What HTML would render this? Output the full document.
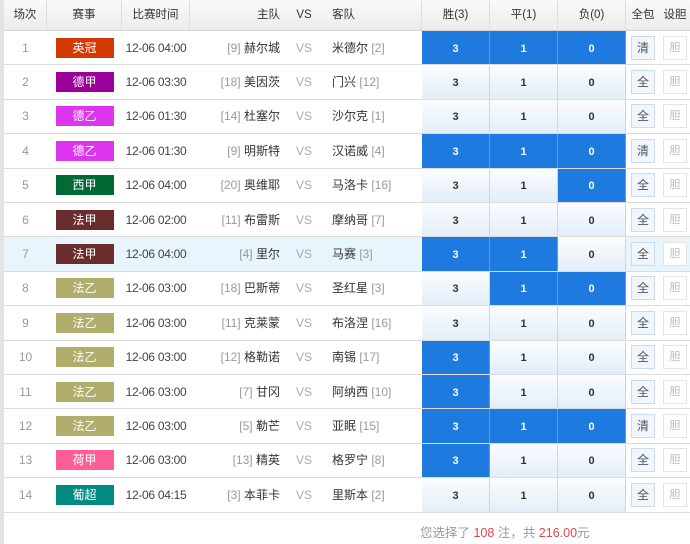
<!DOCTYPE html>
<html><head><meta charset="utf-8"><style>
*{margin:0;padding:0;box-sizing:border-box}
body{width:690px;height:544px;background:#fff;font-family:"Liberation Sans","Noto Sans CJK SC",sans-serif;font-size:12px;color:#333;position:relative;overflow:hidden}
.strip{position:absolute;left:0;top:0;width:4px;height:544px;background:#e4e4e4}
.r{position:absolute;left:4px;width:686px;display:grid;grid-template-columns:43px 75px 68px 98px 32px 102px 68px 68px 68px 34px 30px;border-bottom:1px solid #dcdcdc;align-items:stretch}
.r>div{display:flex;align-items:center;justify-content:center;white-space:nowrap;line-height:14px}
.hd{top:0;height:31px;background:linear-gradient(#fafafa,#ececec);border-bottom:1px solid #d4d4d4}
.hd>div{border-right:1px solid #dedede;color:#333;font-size:11.5px}
.hd>div.h{justify-content:flex-end;padding-right:8px;border-right:none}
.hd>div.v{border-right:none}
.hd>div.a{justify-content:flex-start;padding-left:12px}
.n{color:#999}
.lab{width:58px;height:20px;color:#fff;display:flex;align-items:center;justify-content:center;font-size:12px}
.t{color:#444;font-size:12px;letter-spacing:-0.3px}
.h{justify-content:flex-end!important;padding-right:8px}
.a{justify-content:flex-start!important;padding-left:12px}
.g{color:#999}
.v{color:#aaa}
.c{font-weight:bold;font-size:11px;background:linear-gradient(#fbfcfe,#e3eef9);border-right:1px solid #c8d8ea;color:#333;padding-top:2px}
.c.b{background:#1f7ae0;color:#fff;border-right:1px solid #5d9ce6}
.btn{width:24px;height:24px;border:1px solid #c9dcec;background:#f0f6fb;font-size:12px;color:#555;display:flex;align-items:center;justify-content:center}
.dan{width:24px;height:24px;border:1px solid #e4e4e4;background:#fff;font-size:11px;color:#bbb;display:flex;align-items:center;justify-content:center}
.sel{background:#e8f5fd}
.foot{position:absolute;top:522px;left:420px;width:300px;color:#999;font-size:12.5px}
.foot b{font-weight:normal;color:#e0474c}
</style></head><body>
<div class="strip"></div>
<div class="r hd"><div>场次</div><div>赛事</div><div>比赛时间</div><div class="h">主队</div><div class="v" style="color:#333">VS</div><div class="a">客队</div><div>胜(3)</div><div>平(1)</div><div>负(0)</div><div style="border-right:none">全包</div><div style="border-right:none">设胆</div></div>

<div class="r" style="top:31px;height:34.4px"><div class="n">1</div><div><span class="lab" style="background:#d33a02">英冠</span></div><div class="t">12-06 04:00</div><div class="h"><span class="g">[9]&nbsp;</span>赫尔城</div><div class="v">VS</div><div class="a">米德尔&nbsp;<span class="g">[2]</span></div><div class="c b">3</div><div class="c b">1</div><div class="c b">0</div><div><span class="btn">清</span></div><div><span class="dan">胆</span></div></div>

<div class="r" style="top:65.4px;height:34.4px"><div class="n">2</div><div><span class="lab" style="background:#9b009a">德甲</span></div><div class="t">12-06 03:30</div><div class="h"><span class="g">[18]&nbsp;</span>美因茨</div><div class="v">VS</div><div class="a">门兴&nbsp;<span class="g">[12]</span></div><div class="c">3</div><div class="c">1</div><div class="c">0</div><div><span class="btn">全</span></div><div><span class="dan">胆</span></div></div>

<div class="r" style="top:99.8px;height:34.4px"><div class="n">3</div><div><span class="lab" style="background:#dd35ee">德乙</span></div><div class="t">12-06 01:30</div><div class="h"><span class="g">[14]&nbsp;</span>杜塞尔</div><div class="v">VS</div><div class="a">沙尔克&nbsp;<span class="g">[1]</span></div><div class="c">3</div><div class="c">1</div><div class="c">0</div><div><span class="btn">全</span></div><div><span class="dan">胆</span></div></div>

<div class="r" style="top:134.2px;height:34.4px"><div class="n">4</div><div><span class="lab" style="background:#dd35ee">德乙</span></div><div class="t">12-06 01:30</div><div class="h"><span class="g">[9]&nbsp;</span>明斯特</div><div class="v">VS</div><div class="a">汉诺威&nbsp;<span class="g">[4]</span></div><div class="c b">3</div><div class="c b">1</div><div class="c b">0</div><div><span class="btn">清</span></div><div><span class="dan">胆</span></div></div>

<div class="r" style="top:168.6px;height:34.4px"><div class="n">5</div><div><span class="lab" style="background:#006a35">西甲</span></div><div class="t">12-06 04:00</div><div class="h"><span class="g">[20]&nbsp;</span>奥维耶</div><div class="v">VS</div><div class="a">马洛卡&nbsp;<span class="g">[16]</span></div><div class="c">3</div><div class="c">1</div><div class="c b">0</div><div><span class="btn">全</span></div><div><span class="dan">胆</span></div></div>

<div class="r" style="top:203px;height:34.4px"><div class="n">6</div><div><span class="lab" style="background:#6a2c2c">法甲</span></div><div class="t">12-06 02:00</div><div class="h"><span class="g">[11]&nbsp;</span>布雷斯</div><div class="v">VS</div><div class="a">摩纳哥&nbsp;<span class="g">[7]</span></div><div class="c">3</div><div class="c">1</div><div class="c">0</div><div><span class="btn">全</span></div><div><span class="dan">胆</span></div></div>

<div class="r sel" style="top:237.4px;height:34.4px"><div class="n">7</div><div><span class="lab" style="background:#6a2c2c">法甲</span></div><div class="t">12-06 04:00</div><div class="h"><span class="g">[4]&nbsp;</span>里尔</div><div class="v">VS</div><div class="a">马赛&nbsp;<span class="g">[3]</span></div><div class="c b">3</div><div class="c b">1</div><div class="c">0</div><div><span class="btn">全</span></div><div><span class="dan">胆</span></div></div>

<div class="r" style="top:271.8px;height:34.4px"><div class="n">8</div><div><span class="lab" style="background:#b1ad6c">法乙</span></div><div class="t">12-06 03:00</div><div class="h"><span class="g">[18]&nbsp;</span>巴斯蒂</div><div class="v">VS</div><div class="a">圣红星&nbsp;<span class="g">[3]</span></div><div class="c">3</div><div class="c b">1</div><div class="c b">0</div><div><span class="btn">全</span></div><div><span class="dan">胆</span></div></div>

<div class="r" style="top:306.2px;height:34.4px"><div class="n">9</div><div><span class="lab" style="background:#b1ad6c">法乙</span></div><div class="t">12-06 03:00</div><div class="h"><span class="g">[11]&nbsp;</span>克莱蒙</div><div class="v">VS</div><div class="a">布洛涅&nbsp;<span class="g">[16]</span></div><div class="c">3</div><div class="c">1</div><div class="c">0</div><div><span class="btn">全</span></div><div><span class="dan">胆</span></div></div>

<div class="r" style="top:340.6px;height:34.4px"><div class="n">10</div><div><span class="lab" style="background:#b1ad6c">法乙</span></div><div class="t">12-06 03:00</div><div class="h"><span class="g">[12]&nbsp;</span>格勒诺</div><div class="v">VS</div><div class="a">南锡&nbsp;<span class="g">[17]</span></div><div class="c b">3</div><div class="c">1</div><div class="c">0</div><div><span class="btn">全</span></div><div><span class="dan">胆</span></div></div>

<div class="r" style="top:375px;height:34.4px"><div class="n">11</div><div><span class="lab" style="background:#b1ad6c">法乙</span></div><div class="t">12-06 03:00</div><div class="h"><span class="g">[7]&nbsp;</span>甘冈</div><div class="v">VS</div><div class="a">阿纳西&nbsp;<span class="g">[10]</span></div><div class="c b">3</div><div class="c">1</div><div class="c">0</div><div><span class="btn">全</span></div><div><span class="dan">胆</span></div></div>

<div class="r" style="top:409.4px;height:34.4px"><div class="n">12</div><div><span class="lab" style="background:#b1ad6c">法乙</span></div><div class="t">12-06 03:00</div><div class="h"><span class="g">[5]&nbsp;</span>勒芒</div><div class="v">VS</div><div class="a">亚眠&nbsp;<span class="g">[15]</span></div><div class="c b">3</div><div class="c b">1</div><div class="c b">0</div><div><span class="btn">清</span></div><div><span class="dan">胆</span></div></div>

<div class="r" style="top:443.8px;height:34.4px"><div class="n">13</div><div><span class="lab" style="background:#fe5f96">荷甲</span></div><div class="t">12-06 03:00</div><div class="h"><span class="g">[13]&nbsp;</span>精英</div><div class="v">VS</div><div class="a">格罗宁&nbsp;<span class="g">[8]</span></div><div class="c b">3</div><div class="c">1</div><div class="c">0</div><div><span class="btn">全</span></div><div><span class="dan">胆</span></div></div>

<div class="r" style="top:478.2px;height:34.6px"><div class="n">14</div><div><span class="lab" style="background:#008a82">葡超</span></div><div class="t">12-06 04:15</div><div class="h"><span class="g">[3]&nbsp;</span>本菲卡</div><div class="v">VS</div><div class="a">里斯本&nbsp;<span class="g">[2]</span></div><div class="c">3</div><div class="c">1</div><div class="c">0</div><div><span class="btn">全</span></div><div><span class="dan">胆</span></div></div>

<div class="foot">您选择了 <b>108</b> 注，共 <b>216.00</b>元</div>
</body></html>
